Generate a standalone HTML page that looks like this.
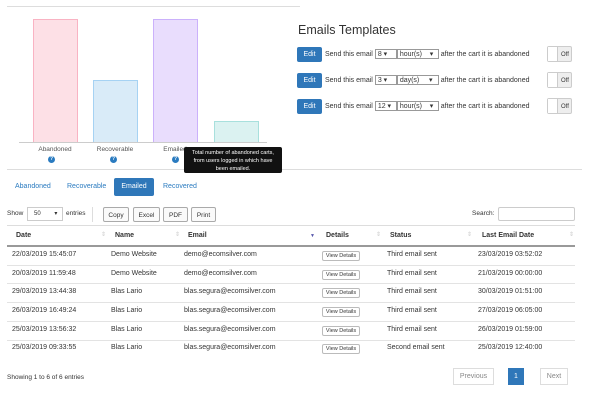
<!DOCTYPE html>
<html><head><style>
body{margin:0;width:601px;height:401px;background:#fff;font-family:"Liberation Sans",sans-serif;color:#333;position:relative;overflow:hidden}
.a{position:absolute}
.bar{position:absolute;border:1px solid}
.lbl{position:absolute;font-size:6.5px;color:#555;text-align:center;width:60px}
.q{position:absolute;width:7px;height:7px;border-radius:50%;background:#2a7bc0;color:#fff;font-size:5px;text-align:center;line-height:7px;font-weight:bold}
.edit{position:absolute;left:297px;width:25px;height:15px;background:#2f77b9;border-radius:2px;color:#fff;font-size:7px;text-align:center;line-height:15px}
.rt{position:absolute;left:325px;font-size:7px;color:#333;white-space:nowrap}
.sel{display:inline-block;border:1px solid #999;height:10px;line-height:10px;font-size:7px;vertical-align:middle;padding:0 2px;box-sizing:border-box;position:relative}
.tg{position:absolute;left:547px;width:25px;height:16px;border:1px solid #ccc;border-radius:2px;background:#eee;font-size:6px;line-height:16px;box-sizing:border-box}
.tg span{position:absolute;left:0;top:0;width:9px;height:14px;background:#fff;border-right:1px solid #ccc}
.tg b{position:absolute;left:13px;font-weight:normal}
.btn{position:absolute;top:207px;height:15px;border:1px solid #aaa;border-radius:2px;font-size:6.5px;line-height:15px;text-align:center;box-sizing:border-box;background:#fafafa}
.th{position:absolute;top:232px;font-size:7px;font-weight:bold;color:#333}
.td{position:absolute;font-size:7px;color:#333;white-space:nowrap}
.vd{position:absolute;left:322px;width:38px;height:10px;border:1px solid #bbb;border-radius:2px;font-size:5.5px;line-height:9px;text-align:center;box-sizing:border-box}
.rl{position:absolute;left:7px;width:568px;height:1px;background:#e3e3e3}
</style></head><body>
<div class="a" style="left:7px;top:6px;width:293px;height:1px;background:#ddd"></div>
<div class="bar" style="left:33px;top:19px;width:43px;height:122px;background:#fde0e6;border-color:#f9b3c3"></div>
<div class="bar" style="left:93px;top:80px;width:43px;height:61px;background:#d9ebf8;border-color:#a6d2f3"></div>
<div class="bar" style="left:153px;top:19px;width:43px;height:122px;background:#e9ddfd;border-color:#cbb1fb"></div>
<div class="bar" style="left:214px;top:121px;width:43px;height:20px;background:#dbf2f1;border-color:#a8e0dd"></div>
<div class="a" style="left:19px;top:142px;width:248px;height:1px;background:#ccc"></div>
<div class="lbl" style="left:25px;top:146px">Abandoned</div>
<div class="lbl" style="left:85px;top:146px">Recoverable</div>
<div class="lbl" style="left:145px;top:146px">Emailed</div>
<div class="q" style="left:48px;top:156px">?</div>
<div class="q" style="left:110px;top:156px">?</div>
<div class="q" style="left:172px;top:156px">?</div>
<div class="a" style="left:184px;top:147px;width:98px;height:26px;background:#111;border-radius:2px;color:#fff;font-size:5.5px;text-align:center;line-height:8px;padding-top:2px;box-sizing:border-box">Total number of abandoned carts,<br>from users logged in which have<br>been emailed.</div>
<div class="a" style="left:7px;top:169px;width:177px;height:1px;background:#ddd"></div>
<div class="a" style="left:282px;top:169px;width:300px;height:1px;background:#ddd"></div>
<div class="td" style="left:15px;top:183px;color:#2a7bc0">Abandoned</div>
<div class="td" style="left:67px;top:183px;color:#2a7bc0">Recoverable</div>
<div class="a" style="left:114px;top:178px;width:40px;height:18px;background:#2f77b9;border-radius:2px;color:#fff;font-size:7px;line-height:18px;text-align:center">Emailed</div>
<div class="td" style="left:163px;top:183px;color:#2a7bc0">Recovered</div>

<div class="a" style="left:298px;top:23px;font-size:12.5px;color:#333">Emails Templates</div>
<div class="edit" style="top:47px">Edit</div>
<div class="rt" style="top:49px">Send this email <span class="sel" style="width:22px">8 ▾</span><span class="sel" style="width:42px">hour(s) &nbsp; &nbsp;▾</span> after the cart it is abandoned</div>
<div class="tg" style="top:46px"><span></span><b>Off</b></div>
<div class="edit" style="top:73px">Edit</div>
<div class="rt" style="top:75px">Send this email <span class="sel" style="width:22px">3 ▾</span><span class="sel" style="width:42px">day(s) &nbsp; &nbsp; ▾</span> after the cart it is abandoned</div>
<div class="tg" style="top:72px"><span></span><b>Off</b></div>
<div class="edit" style="top:99px">Edit</div>
<div class="rt" style="top:101px">Send this email <span class="sel" style="width:22px">12 ▾</span><span class="sel" style="width:42px">hour(s) &nbsp; &nbsp;▾</span> after the cart it is abandoned</div>
<div class="tg" style="top:98px"><span></span><b>Off</b></div>

<div class="td" style="left:7px;top:210px;font-size:6.5px">Show</div>
<div class="a" style="left:27px;top:207px;width:36px;height:14px;border:1px solid #ccc;box-sizing:border-box;font-size:6px;line-height:12px;padding-left:6px">50 <span style="margin-left:12px">▾</span></div>
<div class="td" style="left:66px;top:210px;font-size:6.5px">entries</div>
<div class="a" style="left:92px;top:207px;width:1px;height:15px;background:#ddd"></div>
<div class="btn" style="left:103px;width:26px">Copy</div>
<div class="btn" style="left:133px;width:27px">Excel</div>
<div class="btn" style="left:163px;width:25px">PDF</div>
<div class="btn" style="left:191px;width:25px">Print</div>
<div class="td" style="left:472px;top:210px;font-size:6.5px">Search:</div>
<div class="a" style="left:498px;top:207px;width:77px;height:14px;border:1px solid #ccc;box-sizing:border-box;border-radius:2px"></div>
<div class="a" style="left:7px;top:225px;width:568px;height:1px;background:#ddd"></div>
<div class="a" style="left:7px;top:245px;width:568px;height:2px;background:#999"></div>
<div class="th" style="left:16px">Date</div>
<div class="th" style="left:115px">Name</div>
<div class="th" style="left:188px">Email</div>
<div class="a" style="left:310px;top:233px;font-size:5px;color:#55a">▼</div>
<div class="th" style="left:326px">Details</div>
<div class="th" style="left:390px">Status</div>
<div class="th" style="left:482px">Last Email Date</div>
<div class="a" style="left:101px;top:231px;font-size:6px;color:#ccc">⇕</div>
<div class="a" style="left:175px;top:231px;font-size:6px;color:#ccc">⇕</div>
<div class="a" style="left:376px;top:231px;font-size:6px;color:#ccc">⇕</div>
<div class="a" style="left:467px;top:231px;font-size:6px;color:#ccc">⇕</div>
<div class="a" style="left:569px;top:231px;font-size:6px;color:#ccc">⇕</div>

<div class="td" style="left:12px;top:251px">22/03/2019 15:45:07</div><div class="td" style="left:111px;top:251px">Demo Website</div><div class="td" style="left:184px;top:251px">demo@ecomsilver.com</div><div class="vd" style="top:251px">View Details</div><div class="td" style="left:387px;top:251px">Third email sent</div><div class="td" style="left:478px;top:251px">23/03/2019 03:52:02</div>
<div class="rl" style="top:265px"></div>
<div class="td" style="left:12px;top:270px">20/03/2019 11:59:48</div><div class="td" style="left:111px;top:270px">Demo Website</div><div class="td" style="left:184px;top:270px">demo@ecomsilver.com</div><div class="vd" style="top:270px">View Details</div><div class="td" style="left:387px;top:270px">Third email sent</div><div class="td" style="left:478px;top:270px">21/03/2019 00:00:00</div>
<div class="rl" style="top:283px"></div>
<div class="td" style="left:12px;top:288px">29/03/2019 13:44:38</div><div class="td" style="left:111px;top:288px">Blas Lario</div><div class="td" style="left:184px;top:288px">blas.segura@ecomsilver.com</div><div class="vd" style="top:288px">View Details</div><div class="td" style="left:387px;top:288px">Third email sent</div><div class="td" style="left:478px;top:288px">30/03/2019 01:51:00</div>
<div class="rl" style="top:302px"></div>
<div class="td" style="left:12px;top:307px">26/03/2019 16:49:24</div><div class="td" style="left:111px;top:307px">Blas Lario</div><div class="td" style="left:184px;top:307px">blas.segura@ecomsilver.com</div><div class="vd" style="top:307px">View Details</div><div class="td" style="left:387px;top:307px">Third email sent</div><div class="td" style="left:478px;top:307px">27/03/2019 06:05:00</div>
<div class="rl" style="top:321px"></div>
<div class="td" style="left:12px;top:326px">25/03/2019 13:56:32</div><div class="td" style="left:111px;top:326px">Blas Lario</div><div class="td" style="left:184px;top:326px">blas.segura@ecomsilver.com</div><div class="vd" style="top:326px">View Details</div><div class="td" style="left:387px;top:326px">Third email sent</div><div class="td" style="left:478px;top:326px">26/03/2019 01:59:00</div>
<div class="rl" style="top:340px"></div>
<div class="td" style="left:12px;top:344px">25/03/2019 09:33:55</div><div class="td" style="left:111px;top:344px">Blas Lario</div><div class="td" style="left:184px;top:344px">blas.segura@ecomsilver.com</div><div class="vd" style="top:344px">View Details</div><div class="td" style="left:387px;top:344px">Second email sent</div><div class="td" style="left:478px;top:344px">25/03/2019 12:40:00</div>

<div class="td" style="left:7px;top:374px;font-size:6.5px">Showing 1 to 6 of 6 entries</div>
<div class="a" style="left:453px;top:368px;width:41px;height:17px;border:1px solid #ddd;box-sizing:border-box;font-size:7px;color:#888;text-align:center;line-height:15px">Previous</div>
<div class="a" style="left:508px;top:368px;width:16px;height:17px;background:#2f77b9;color:#fff;font-size:7px;text-align:center;line-height:17px">1</div>
<div class="a" style="left:540px;top:368px;width:28px;height:17px;border:1px solid #ddd;box-sizing:border-box;font-size:7px;color:#888;text-align:center;line-height:15px">Next</div>
</body></html>
